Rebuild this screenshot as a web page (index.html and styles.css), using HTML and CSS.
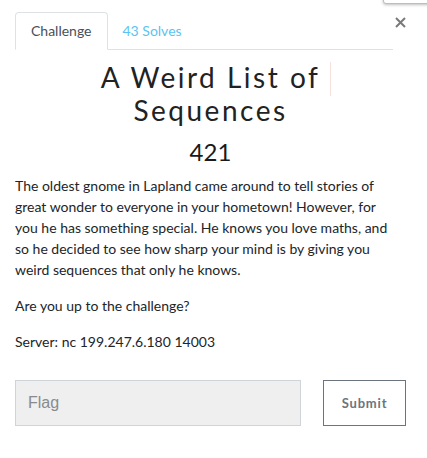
FILE: index.html
```html
<!DOCTYPE html>
<html>
<head>
<meta charset="utf-8">
<link rel="stylesheet" href="styles.css">
</head>
<body>
<div class="corner-popup"></div>
<div class="modal">
  <div class="modal-head">
    <ul class="nav-tabs">
      <li class="tab active">Challenge</li>
      <li class="tab link">43 Solves</li>
    </ul>
    <button class="close" aria-label="Close">
      <svg width="11" height="11" viewBox="0 0 11 11"><path d="M1 1 L10 10 M10 1 L1 10" stroke="#7a7a7a" stroke-width="2" fill="none"/></svg>
    </button>
  </div>
  <h2 class="title">A Weird List of<br>Sequences<span class="caret"></span></h2>
  <h3 class="value">421</h3>
  <div class="desc">
    <p>The oldest gnome in Lapland came around to tell stories of great wonder to everyone in your hometown! However, for you he has something special. He knows you love maths, and so he decided to see how sharp your mind is by giving you weird sequences that only he knows.</p>
    <p>Are you up to the challenge?</p>
    <p>Server: nc 199.247.6.180 14003</p>
  </div>
  <form class="flag-form">
    <input class="flag-input" type="text" placeholder="Flag">
    <button class="submit" type="button">Submit</button>
  </form>
</div>
</body>
</html>
```
FILE: styles.css
```css
html, body {
  margin: 0;
  padding: 0;
  background: #fff;
}
body {
  font-family: Lato, "Noto Sans", sans-serif;
  color: #212529;
  position: relative;
  overflow: hidden;
}
.corner-popup {
  position: absolute;
  left: 383px;
  top: -12px;
  width: 60px;
  height: 14px;
  border: 1px solid #bdbdbd;
  border-radius: 3px;
  background: #fff;
  box-shadow: 0 1px 3px rgba(0,0,0,0.25);
}
.modal {
  padding: 12px 21px 0 15px;
}
.modal-head {
  display: flex;
  align-items: flex-start;
}
.nav-tabs {
  flex: 1;
  display: flex;
  list-style: none;
  margin: 0;
  padding: 0;
  border-bottom: 1px solid #dee2e6;
}
.tab {
  height: 36px;
  line-height: 36px;
  padding: 0 15px;
  font-size: 14px;
  border: 1px solid transparent;
  border-radius: 4px 4px 0 0;
  margin-bottom: -1px;
}
.tab.active {
  color: #495057;
  border-color: #dee2e6 #dee2e6 #fff;
  background: #fff;
}
.tab.link {
  color: #5bc3f2;
  padding-left: 14px;
}
.close {
  width: 13px;
  height: 13px;
  margin-top: 4px;
  padding: 0;
  border: 0;
  background: none;
  display: flex;
  align-items: center;
  justify-content: flex-end;
}
.title {
  position: relative;
  margin: 11px 0 0;
  text-align: center;
  font-family: Lato, sans-serif;
  font-weight: 400;
  font-size: 28px;
  line-height: 33px;
  letter-spacing: 2.5px;
  color: #222;
}
.caret {
  position: absolute;
  left: 315px;
  top: 1px;
  width: 1px;
  height: 34px;
  background: #f7e0dc;
}
.value {
  margin: 11px 0 0;
  text-align: center;
  font-weight: 400;
  font-size: 24px;
  line-height: 28px;
  color: #1a1a1a;
}
.desc {
  width: 378px;
  margin-top: 9px;
  font-size: 14px;
  line-height: 21px;
  color: #212529;
}
.desc p {
  margin: 0 0 15px;
}
.flag-form {
  display: flex;
  gap: 22px;
  margin-top: 28px;
}
.flag-input {
  box-sizing: border-box;
  width: 286px;
  height: 46px;
  margin: 0;
  padding: 0 12px;
  border: 1px solid #cfd4da;
  background: #efefef;
  font-family: "Liberation Sans", Arial, sans-serif;
  font-size: 16px;
  color: #495057;
  border-radius: 0;
}
.flag-input::placeholder {
  color: #878b8f;
}
.submit {
  box-sizing: border-box;
  width: 83px;
  height: 46px;
  margin: 0;
  border: 1px solid #6c757d;
  background: #fff;
  color: #6c757d;
  font-family: Lato, sans-serif;
  font-weight: 700;
  font-size: 13px;
  letter-spacing: 0.8px;
  border-radius: 0;
}
```
